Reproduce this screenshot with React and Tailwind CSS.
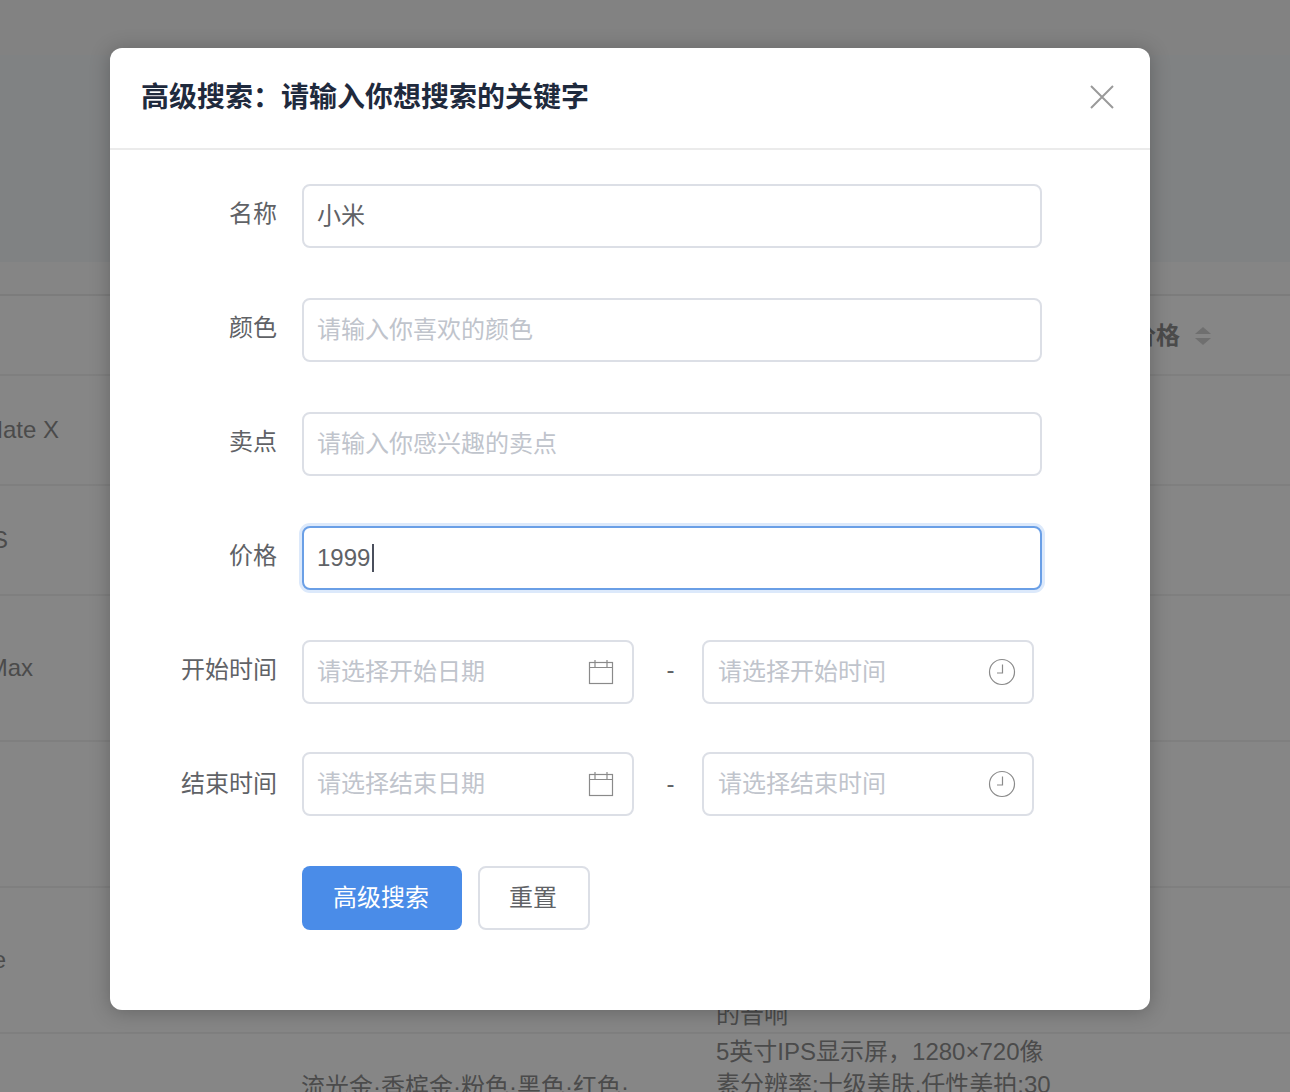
const rows = [
  { name: "Mate X", nameWidth: "w-[59px]", height: "h-[110px]" },
  { name: "Mate S", nameWidth: "w-[8px]", height: "h-[110px]" },
  { name: "Mate Max", nameWidth: "w-[33px]", height: "h-[146px]" },
  { name: "", nameWidth: "w-[8px]", height: "h-[146px]" },
];

const CalendarIcon = () => (
  <svg width="26" height="26" viewBox="0 0 26 26" fill="none" stroke="#8a8a8a" strokeWidth="1.2">
    <rect x="1.5" y="3.5" width="23" height="21" />
    <path d="M1.5 8.5h23M7 1v7M19 1v7" />
  </svg>
);

const ClockIcon = () => (
  <svg width="28" height="28" viewBox="0 0 28 28" fill="none" stroke="#8a8a8a" strokeWidth="1.2">
    <circle cx="14" cy="14" r="12.5" />
    <path d="M14.5 6.5v8.5H9" />
  </svg>
);

const Background = () => (
  <div className="flex flex-col w-full h-full text-[24px] text-[#4b4b4b]">
    <div className="h-[55px] shrink-0 bg-[#828282]"></div>
    <div className="h-[207px] shrink-0 bg-[#808283]"></div>
    <div className="h-[34px] shrink-0 bg-[#858585] border-b-2 border-[#7c7c7c]"></div>
    <div className="h-20 pt-[2px] shrink-0 flex items-center bg-[#868686] border-b-2 border-[#7f7f7f]">
      <div className="w-[1180px] flex justify-end font-semibold whitespace-nowrap">价格</div>
      <div className="ml-[15px] flex flex-col gap-[4px]">
        <div className="w-0 h-0 border-x-[8px] border-x-transparent border-b-[7px] border-b-[#6f6f6f]"></div>
        <div className="w-0 h-0 border-x-[8px] border-x-transparent border-t-[7px] border-t-[#6f6f6f]"></div>
      </div>
    </div>
    {rows.map((row, i) => (
      <div key={i} className={`${row.height} shrink-0 flex items-center bg-[#868686] border-b-2 border-[#7f7f7f]`}>
        <div className={`${row.nameWidth} flex justify-end whitespace-nowrap`}>{row.name}</div>
      </div>
    ))}
    <div className="h-[146px] shrink-0 flex items-center justify-between bg-[#868686] border-b-2 border-[#7f7f7f]">
      <div className="w-[6px] flex justify-end whitespace-nowrap">Phone</div>
      <div className="w-[400px] mr-[174px] self-end pb-[1px] leading-[33px] whitespace-nowrap">的音响</div>
    </div>
    <div className="flex-1 flex bg-[#868686] whitespace-nowrap">
      <div className="ml-[301px] w-[415px] pt-[36px] leading-[33px]">流光金·香槟金·粉色·黑色·红色·</div>
      <div className="pt-[1px] leading-[33px]">
        <div>5英寸IPS显示屏，1280×720像</div>
        <div>素分辨率:十级美肤,任性美拍:30</div>
      </div>
    </div>
  </div>
);

const Field = ({ label, children, className = "mb-[50px]", labelClass = "pb-[5px]" }) => (
  <div className={`flex items-center h-16 ${className}`}>
    <label className={`w-[192px] pr-[25px] text-right text-[#606266] whitespace-nowrap ${labelClass}`}>{label}</label>
    {children}
  </div>
);

const TextInput = ({ value, placeholder }) => (
  <input
    readOnly
    value={value}
    placeholder={placeholder}
    className={`w-[740px] h-16 pl-[13px] pr-[14px] rounded-lg border-2 border-[#dcdfe6] bg-white text-[#606266] outline-none placeholder:text-[#c0c4cc] ${value ? "pb-[5px]" : ""}`}
  />
);

const PickerInput = ({ placeholder, icon, padding }) => (
  <div className={`w-[332px] h-16 flex items-center justify-between rounded-lg border-2 border-[#dcdfe6] bg-white ${padding}`}>
    <span className="text-[#c0c4cc] whitespace-nowrap">{placeholder}</span>
    {icon}
  </div>
);

const App = () => {
  return (
    <div className="relative w-[1290px] h-[1092px] overflow-hidden font-['Liberation_Sans','Noto_Sans_CJK_SC',sans-serif] text-[24px]">
      <Background />

      {/* Dialog */}
      <div className="absolute left-[110px] top-12 w-[1040px] h-[962px] rounded-xl bg-white shadow-[0_2px_20px_rgba(0,0,0,0.25)]">
        <div className="h-[102px] pl-[31px] pr-[36px] flex items-center justify-between border-b-2 border-[#ebebeb]">
          <h2 className="text-[28px] font-semibold text-[#1f2a3d] whitespace-nowrap">高级搜索：请输入你想搜索的关键字</h2>
          <svg className="-mt-[2px]" width="24" height="24" viewBox="0 0 24 24" fill="none" stroke="#9a9a9a" strokeWidth="2">
            <path d="M1 1l22 22M23 1L1 23" />
          </svg>
        </div>

        <form className="pt-[34px]">
          <Field label="名称">
            <TextInput value="小米" />
          </Field>
          <Field label="颜色">
            <TextInput value="" placeholder="请输入你喜欢的颜色" />
          </Field>
          <Field label="卖点">
            <TextInput value="" placeholder="请输入你感兴趣的卖点" />
          </Field>
          <Field label="价格">
            <div className="w-[740px] h-16 pl-[13px] pr-[14px] flex items-center rounded-lg border-2 border-[#6a9fe6] bg-white text-[#606266] shadow-[0_0_0_3px_#dce9fb]">
              1999
              <span className="ml-[2px] w-[2px] h-7 bg-[#4a4f5c]"></span>
            </div>
          </Field>
          <Field label="开始时间" className="mb-[48px]">
            <PickerInput placeholder="请选择开始日期" icon={<CalendarIcon />} padding="pl-[13px] pr-[18px]" />
            <span className="w-[68px] pl-[5px] pb-[4px] text-center text-[#606266]">-</span>
            <PickerInput placeholder="请选择开始时间" icon={<ClockIcon />} padding="pl-[14px] pr-[16px]" />
          </Field>
          <Field label="结束时间" labelClass="pb-[1px]">
            <PickerInput placeholder="请选择结束日期" icon={<CalendarIcon />} padding="pl-[13px] pr-[18px]" />
            <span className="w-[68px] pl-[5px] text-center text-[#606266]">-</span>
            <PickerInput placeholder="请选择结束时间" icon={<ClockIcon />} padding="pl-[14px] pr-[16px]" />
          </Field>
          <div className="pl-[192px] flex gap-4">
            <button type="button" className="w-40 h-16 pr-[2px] rounded-lg bg-[#4a8ce8] text-white">高级搜索</button>
            <button type="button" className="w-28 h-16 pr-[2px] rounded-lg border-2 border-[#dcdfe6] bg-white text-[#606266]">重置</button>
          </div>
        </form>
      </div>
    </div>
  );
};

export default App;
